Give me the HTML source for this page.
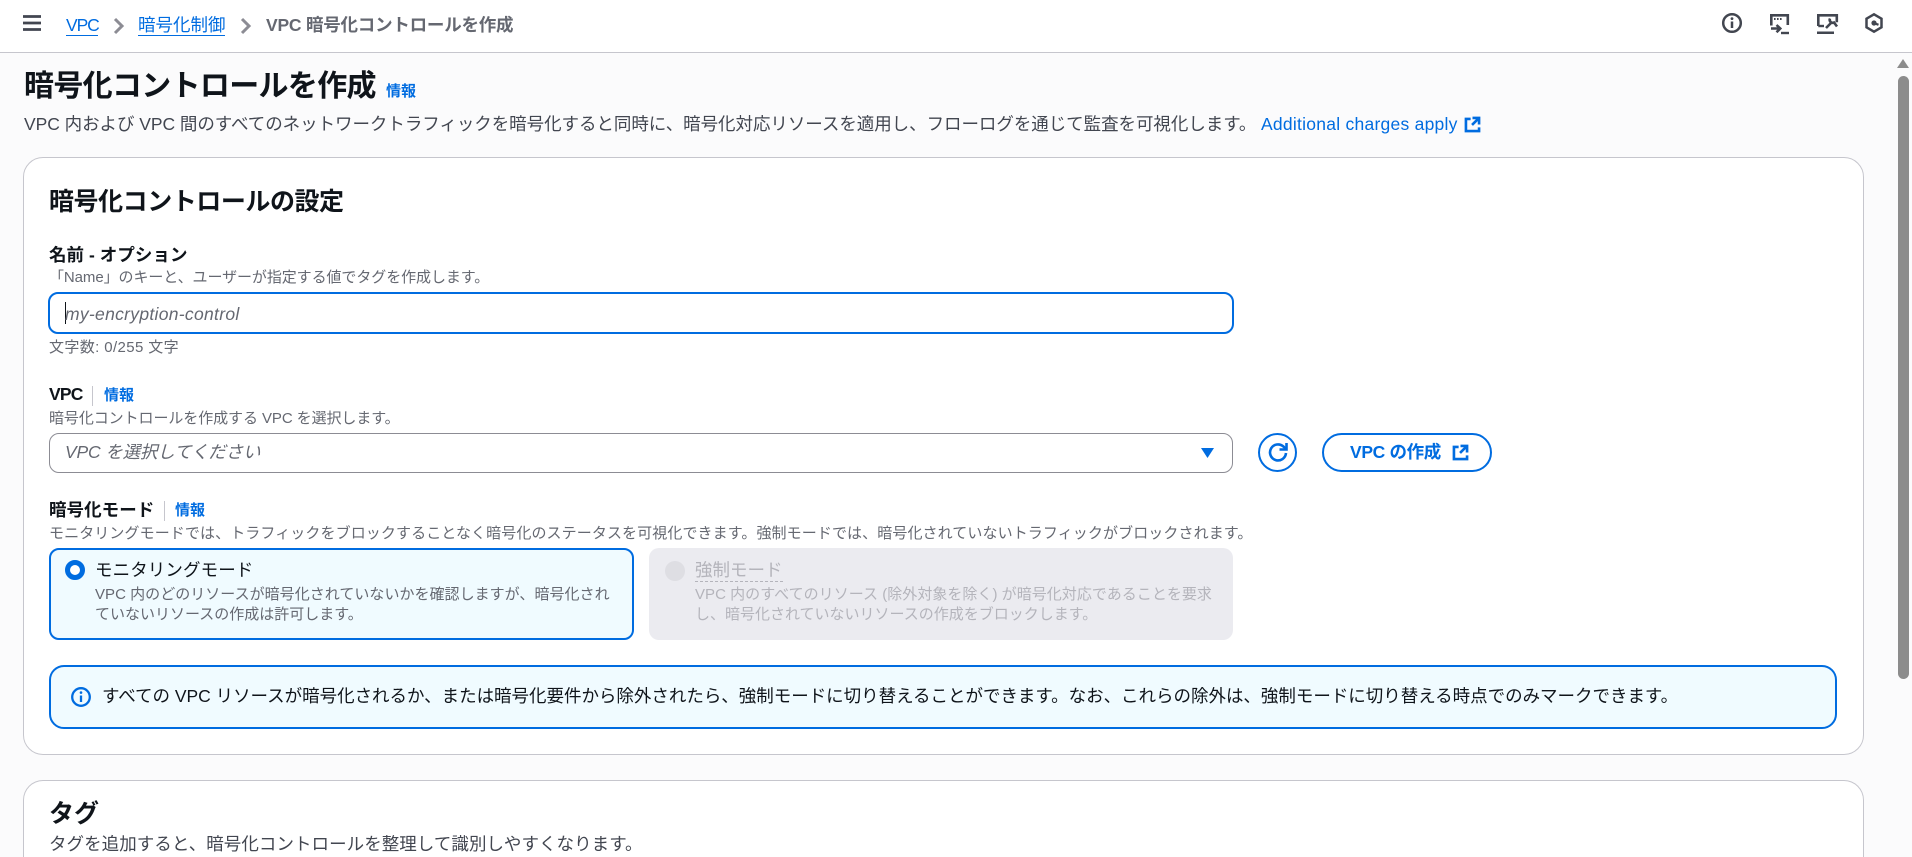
<!DOCTYPE html>
<html lang="ja"><head><meta charset="utf-8"><title>暗号化コントロールを作成</title>
<style>
html,body{margin:0;padding:0;width:1912px;height:857px;overflow:hidden;background:#fbfbfc}
body{position:relative;font-family:"Liberation Sans","Noto Sans CJK JP",sans-serif;color:#0f141a}
.a{position:absolute;box-sizing:border-box}
.t{position:absolute;white-space:nowrap;line-height:24px;height:24px}
.b{font-weight:700}
.s{font-size:15px;color:#656871}
.m{font-size:17.5px}
.l{color:#006ce0}
svg{position:absolute;overflow:visible;fill:none}
</style></head><body>
<div class="a" style="left:0;top:0;width:1912px;height:53px;background:#fff;border-bottom:1.5px solid #c6c6cd"></div>
<svg style="left:23px;top:15px" width="18" height="16" viewBox="0 0 18 16"><path d="M0 1.500h18M0 8h18M0 14.500h18" stroke="#424650" stroke-width="2.800"/></svg>
<div class="t m l" style="left:66px;top:13px;letter-spacing:-1.1px">VPC</div>
<div class="a" style="left:66px;top:35px;width:32px;height:1.3px;background:#006ce0"></div>
<svg style="left:113px;top:18px" width="11" height="16" viewBox="0 0 11 16"><path d="M2 1l7 7-7 7" stroke="#8c8c94" stroke-width="3"/></svg>
<div class="t m l" style="left:138px;top:13px">暗号化制御</div>
<div class="a" style="left:138px;top:35px;width:87px;height:1.3px;background:#006ce0"></div>
<svg style="left:240px;top:18px" width="11" height="16" viewBox="0 0 11 16"><path d="M2 1l7 7-7 7" stroke="#8c8c94" stroke-width="3"/></svg>
<div class="t m b" style="left:266px;top:13px;color:#656871;letter-spacing:-.22px">VPC 暗号化コントロールを作成</div>

<svg style="left:1722px;top:13px" width="20" height="20" viewBox="0 0 20 20"><circle cx="10" cy="10" r="8.800" stroke="#424650" stroke-width="2.500"/><path d="M10 8.500v6.500" stroke="#424650" stroke-width="2.500"/><circle cx="10" cy="5.600" r="1.400" fill="#424650"/></svg>
<svg style="left:1769px;top:14px" width="20" height="20" viewBox="0 0 20 20"><path d="M2.300 11.500V1.300h16.500v9.700" stroke="#424650" stroke-width="2.600"/><path d="M5 5h1.600M8 5h1.600M11 5h1.600" stroke="#424650" stroke-width="2"/><path d="M7.500 11l3.800 3.500-3.800 3.800M2 14.500h8.500" stroke="#424650" stroke-width="2.500"/><path d="M12 19h8" stroke="#424650" stroke-width="2.400"/></svg>
<svg style="left:1817px;top:14px" width="21" height="20" viewBox="0 0 21 20"><path d="M1.300 12V1.300h18.500v7" stroke="#424650" stroke-width="2.600"/><path d="M1.300 12H7" stroke="#424650" stroke-width="2.400"/><path d="M0 18.700h17" stroke="#424650" stroke-width="2.500"/><path d="M9 14l5-5M13 4.500a3 3 0 0 0 4 4l3 4" stroke="#424650" stroke-width="2.600"/></svg>
<svg style="left:1865px;top:13px" width="18" height="20" viewBox="0 0 18 20"><path d="M9 1.300l7.500 4.400v8.600L9 18.700 1.500 14.300V5.700z" stroke="#424650" stroke-width="2.500"/><circle cx="9" cy="10" r="2.600" fill="#424650"/><path d="M9 10l4.500 1.800" stroke="#424650" stroke-width="2.200"/></svg>

<div class="a" style="left:1897px;top:59px;width:12px;height:9px;border-left:6px solid transparent;border-right:6px solid transparent;border-bottom:9px solid #8c8c8c"></div>
<div class="a" style="left:1898px;top:76px;width:11px;height:603px;background:#8c8c8c;border-radius:6px"></div>

<div class="t b" style="left:24px;top:67px;font-size:30px;line-height:40px;height:40px;letter-spacing:-.68px">暗号化コントロールを作成</div>
<div class="t b l" style="left:386px;top:80px;font-size:15px">情報</div>
<div class="t m" style="left:24px;top:112px;color:#424650;letter-spacing:-.05px">VPC 内および VPC 間のすべてのネットワークトラフィックを暗号化すると同時に、暗号化対応リソースを適用し、フローログを通じて監査を可視化します。</div>
<div class="t m l" style="left:1261px;top:112px;letter-spacing:.25px">Additional charges apply</div>
<svg style="left:1465px;top:117px" width="15" height="15" viewBox="0 0 16 16"><path d="M15 8V1H8M15 1L7.500 8.500M6 2H1v13h14v-4" stroke="#006ce0" stroke-width="2.800"/></svg>

<div class="a" style="left:23px;top:157px;width:1841px;height:598px;background:#fff;border:1.25px solid #c6c6cd;border-radius:20px"></div>
<div class="t b" style="left:49px;top:186px;font-size:25px;line-height:32px;height:32px;letter-spacing:-.45px">暗号化コントロールの設定</div>

<div class="t m b" style="left:49px;top:243px;letter-spacing:.05px">名前 - オプション</div>
<div class="t s" style="left:49px;top:266px;letter-spacing:-.08px">「Name」のキーと、ユーザーが指定する値でタグを作成します。</div>
<div class="a" style="left:48px;top:292px;width:1186px;height:42px;border:2.5px solid #006ce0;border-radius:10px;background:#fff"></div>
<div class="a" style="left:65px;top:302px;width:1px;height:22px;background:#0f141a"></div>
<div class="t m" style="left:65px;top:302px;font-style:italic;color:#656871;letter-spacing:.3px">my-encryption-control</div>
<div class="t s" style="left:49px;top:336px;letter-spacing:.38px">文字数: 0/255 文字</div>

<div class="t m b" style="left:49px;top:382px;letter-spacing:-.8px">VPC</div>
<div class="a" style="left:92px;top:386px;width:1px;height:20px;background:#c6c6cd"></div>
<div class="t b l" style="left:104px;top:384px;font-size:15px">情報</div>
<div class="t s" style="left:49px;top:407px;letter-spacing:-.08px">暗号化コントロールを作成する VPC を選択します。</div>
<div class="a" style="left:49px;top:433px;width:1184px;height:40px;border:1.25px solid #8c8c94;border-radius:10px;background:#fff"></div>
<div class="t m" style="left:65px;top:440px;font-style:italic;color:#656871;letter-spacing:-.15px">VPC を選択してください</div>
<svg style="left:1201px;top:448px" width="13" height="10" viewBox="0 0 13 10"><path d="M0 0h13L6.500 10z" fill="#006ce0"/></svg>
<div class="a" style="left:1258px;top:433px;width:39px;height:39px;border:2.500px solid #006ce0;border-radius:50%;background:#fff"></div>
<svg style="left:1268px;top:442px" width="20" height="20" viewBox="0 0 20 20"><path d="M18 11a8 8 0 1 1-2.600-6.500L18 7" stroke="#006ce0" stroke-width="2.600"/><path d="M18.500 1V7.500h-7" stroke="#006ce0" stroke-width="2.600"/></svg>
<div class="a" style="left:1322px;top:433px;width:170px;height:39px;border:2.500px solid #006ce0;border-radius:20px;background:#fff"></div>
<div class="t m b l" style="left:1350px;top:440px;letter-spacing:-.35px">VPC の作成</div>
<svg style="left:1453px;top:445px" width="15" height="15" viewBox="0 0 16 16"><path d="M15 8V1H8M15 1L7.500 8.500M6 2H1v13h14v-4" stroke="#006ce0" stroke-width="2.800"/></svg>

<div class="t m b" style="left:49px;top:498px;letter-spacing:.05px">暗号化モード</div>
<div class="a" style="left:164px;top:501px;width:1px;height:20px;background:#c6c6cd"></div>
<div class="t b l" style="left:175px;top:499px;font-size:15px">情報</div>
<div class="t s" style="left:49px;top:522px;letter-spacing:.1px">モニタリングモードでは、トラフィックをブロックすることなく暗号化のステータスを可視化できます。強制モードでは、暗号化されていないトラフィックがブロックされます。</div>

<div class="a" style="left:49px;top:548px;width:585px;height:92px;border:2.500px solid #006ce0;border-radius:10px;background:#f0fbff"></div>
<div class="a" style="left:65px;top:560px;width:20px;height:20px;border:5.500px solid #006ce0;border-radius:50%;background:#fff"></div>
<div class="t m" style="left:95px;top:558px;letter-spacing:.1px">モニタリングモード</div>
<div class="t s" style="left:95px;top:583px;color:#656871;letter-spacing:.03px">VPC 内のどのリソースが暗号化されていないかを確認しますが、暗号化され</div>
<div class="t s" style="left:95px;top:603px;color:#656871">ていないリソースの作成は許可します。</div>

<div class="a" style="left:649px;top:548px;width:584px;height:92px;border-radius:10px;background:#ebebf0"></div>
<div class="a" style="left:665px;top:561px;width:20px;height:20px;border-radius:50%;background:#dedee3"></div>
<div class="t m" style="left:695px;top:558px;color:#b4b4bb">強制モード</div>
<div class="a" style="left:695px;top:581px;width:88px;height:0;border-bottom:1.250px dashed #b4b4bb"></div>
<div class="t s" style="left:695px;top:583px;color:#b4b4bb;letter-spacing:.03px">VPC 内のすべてのリソース (除外対象を除く) が暗号化対応であることを要求</div>
<div class="t s" style="left:695px;top:603px;color:#b4b4bb">し、暗号化されていないリソースの作成をブロックします。</div>

<div class="a" style="left:49px;top:665px;width:1788px;height:64px;border:2.500px solid #006ce0;border-radius:15px;background:#f0fbff"></div>
<svg style="left:71px;top:687px" width="20" height="20" viewBox="0 0 20 20"><circle cx="10" cy="10" r="8.800" stroke="#006ce0" stroke-width="2.300"/><path d="M10 8.500v6.500" stroke="#006ce0" stroke-width="2.300"/><circle cx="10" cy="5.600" r="1.300" fill="#006ce0"/></svg>
<div class="t m" style="left:102px;top:684px;letter-spacing:-.02px">すべての VPC リソースが暗号化されるか、または暗号化要件から除外されたら、強制モードに切り替えることができます。なお、これらの除外は、強制モードに切り替える時点でのみマークできます。</div>

<div class="a" style="left:23px;top:780px;width:1841px;height:77px;background:#fff;border:1.25px solid #c6c6cd;border-bottom:0;border-radius:20px 20px 0 0"></div>
<div class="t b" style="left:49px;top:798px;font-size:25px;line-height:32px;height:32px">タグ</div>
<div class="t m" style="left:49px;top:832px;color:#424650;letter-spacing:.05px">タグを追加すると、暗号化コントロールを整理して識別しやすくなります。</div>
</body></html>
